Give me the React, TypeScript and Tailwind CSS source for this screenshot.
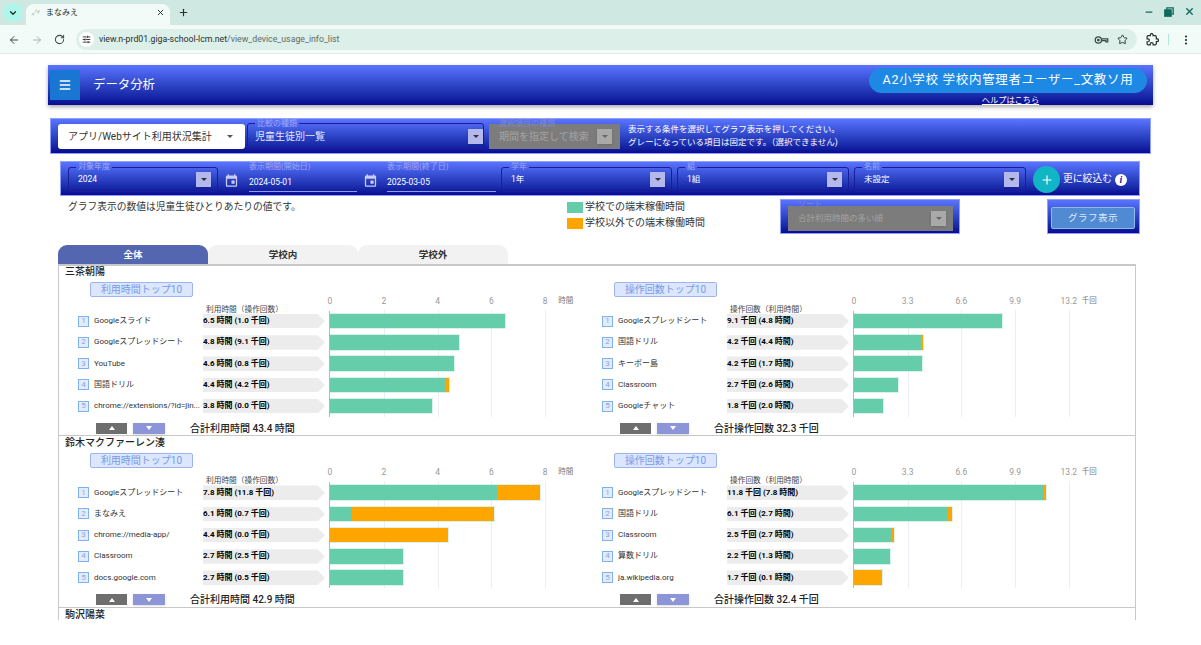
import React from 'react';
import { ArrowLeft, ArrowRight, ChevronDown, EllipsisVertical, Menu, Minus, Plus, RotateCw, SlidersHorizontal, Star, X } from 'lucide-react';

interface RankRow {
  name: string;
  value: string;
  school: number;
  other: number;
}

interface ChartProps {
  title: string;
  header: string;
  unit: string;
  ticks: string[];
  scale: number;
  total: string;
  rows: RankRow[];
}

const timeTicks = ['0', '2', '4', '6', '8'];
const countTicks = ['0', '3.3', '6.6', '9.9', '13.2'];

const students = [
  {
    name: '三茶朝陽',
    time: [
      { name: 'Googleスライド', value: '6.5 時間 (1.0 千回)', school: 175, other: 0 },
      { name: 'Googleスプレッドシート', value: '4.8 時間 (9.1 千回)', school: 129, other: 0 },
      { name: 'YouTube', value: '4.6 時間 (0.8 千回)', school: 124, other: 0 },
      { name: '国語ドリル', value: '4.4 時間 (4.2 千回)', school: 116, other: 2.6 },
      { name: 'chrome://extensions/?id=jin...', value: '3.8 時間 (0.0 千回)', school: 102, other: 0 },
    ],
    timeTotal: '合計利用時間 43.4 時間',
    count: [
      { name: 'Googleスプレッドシート', value: '9.1 千回 (4.8 時間)', school: 148, other: 0 },
      { name: '国語ドリル', value: '4.2 千回 (4.4 時間)', school: 67, other: 2 },
      { name: 'キーボー島', value: '4.2 千回 (1.7 時間)', school: 68, other: 0 },
      { name: 'Classroom', value: '2.7 千回 (2.6 時間)', school: 44, other: 0 },
      { name: 'Googleチャット', value: '1.8 千回 (2.0 時間)', school: 29, other: 0 },
    ],
    countTotal: '合計操作回数 32.3 千回',
  },
  {
    name: '鈴木マクファーレン湊',
    time: [
      { name: 'Googleスプレッドシート', value: '7.8 時間 (11.8 千回)', school: 167, other: 43 },
      { name: 'まなみえ', value: '6.1 時間 (0.7 千回)', school: 22, other: 142 },
      { name: 'chrome://media-app/', value: '4.4 時間 (0.0 千回)', school: 0, other: 118 },
      { name: 'Classroom', value: '2.7 時間 (2.5 千回)', school: 73, other: 0 },
      { name: 'docs.google.com', value: '2.7 時間 (0.5 千回)', school: 73, other: 0 },
    ],
    timeTotal: '合計利用時間 42.9 時間',
    count: [
      { name: 'Googleスプレッドシート', value: '11.8 千回 (7.8 時間)', school: 190, other: 2 },
      { name: '国語ドリル', value: '6.1 千回 (2.7 時間)', school: 94, other: 3.5 },
      { name: 'Classroom', value: '2.5 千回 (2.7 時間)', school: 38, other: 2 },
      { name: '算数ドリル', value: '2.2 千回 (1.3 時間)', school: 36, other: 0 },
      { name: 'ja.wikipedia.org', value: '1.7 千回 (0.1 時間)', school: 0, other: 27.5 },
    ],
    countTotal: '合計操作回数 32.4 千回',
  },
];

const DropButton = ({ muted = false }: { muted?: boolean }) => (
  <span className={`relative flex h-[15px] w-[15px] shrink-0 items-center justify-center shadow-sm ${muted ? 'bg-[#a9a9a9]' : 'bg-[#b4b8ec]'}`}>
    <span className={`h-0 w-0 border-x-[3px] border-t-[3px] border-x-transparent ${muted ? 'border-t-[#666]' : 'border-t-[#333]'}`} />
  </span>
);

// notched outline: the legend breaks the top border behind the label
const Outline = ({ label }: { label: string }) => (
  <fieldset className="absolute inset-x-0 bottom-0 top-[-5px] m-0 rounded-[3px] border border-[#1c1c9a] px-[7px] py-0">
    <legend className="h-[10px] px-[2px] text-[8px] leading-[10px] text-[#9fa8f5]">{label}</legend>
  </fieldset>
);

const OutlineSelect = ({ label, value, className }: { label: string; value: string; className: string }) => (
  <div className={`relative flex h-[25px] items-center justify-between pl-[10px] pr-[7px] ${className}`}>
    <Outline label={label} />
    <span className="relative text-[8.5px] leading-none text-white">{value}</span>
    <DropButton />
  </div>
);

const CalendarIcon = () => (
  <svg viewBox="0 0 24 24" className="mt-[2px] h-[15px] w-[15px] shrink-0" fill="#c9cdf5">
    <path d="M19 4h-1V2h-2v2H8V2H6v2H5a2 2 0 0 0-2 2v14a2 2 0 0 0 2 2h14a2 2 0 0 0 2-2V6a2 2 0 0 0-2-2zm0 16H5V9h14v11zm-7-8h5v5h-5z" />
  </svg>
);

const DateField = ({ label, value, className }: { label: string; value: string; className: string }) => (
  <div className={`relative h-[25px] border-b border-[#8f9bf5] ${className}`}>
    <span className="absolute left-0 top-[-5px] text-[8px] leading-[10px] text-[#9fa8f5]">{label}</span>
    <span className="absolute left-0 top-[10px] text-[8.5px] leading-[10px] text-white">{value}</span>
  </div>
);

const KeyIcon = () => (
  <svg viewBox="0 0 24 14" className="h-[10px] w-[15px]" fill="none" stroke="#3c4a47" strokeWidth="2">
    <circle cx="7" cy="7" r="5" />
    <circle cx="7" cy="7" r="1.2" fill="#3c4a47" />
    <path d="M12 5h10v5h-3v-2h-7" />
  </svg>
);

const ExtensionIcon = () => (
  <svg viewBox="0 0 24 24" className="ml-[9px] h-[13px] w-[13px]" fill="none" stroke="#26302e" strokeWidth="2.2">
    <path d="M20.5 11H19V7c0-1.1-.9-2-2-2h-4V3.5C13 2.12 11.88 1 10.5 1S8 2.12 8 3.5V5H4c-1.1 0-1.99.9-1.99 2v3.8H3.5c1.49 0 2.7 1.21 2.7 2.7s-1.21 2.7-2.7 2.7H2V20c0 1.1.9 2 2 2h3.8v-1.5c0-1.49 1.21-2.7 2.7-2.7s2.7 1.21 2.7 2.7V22H17c1.1 0 2-.9 2-2v-4h1.5c1.38 0 2.5-1.12 2.5-2.5S21.88 11 20.5 11z" />
  </svg>
);

const RestoreIcon = () => (
  <svg viewBox="0 0 12 12" className="h-[10px] w-[10px]" fill="none" stroke="#0e6b5c" strokeWidth="1.6">
    <rect x="1" y="3.5" width="7.5" height="7.5" fill="#0e6b5c" />
    <path d="M3.5 3V1H11v7.5H9" />
  </svg>
);

const FaviconIcon = () => (
  <svg viewBox="0 0 14 12" className="h-[9px] w-[11px]">
    <path d="M1 9 6 5 5 10z" fill="#b8d8d0" />
    <path d="M6 3 9 1 8 7z" fill="#e8d88a" />
    <path d="M9 5 13 2 11 8z" fill="#a8c8ea" />
  </svg>
);

const BrowserChrome = () => (
  <div className="h-[54px] shrink-0 border-b border-[#e2ece9] bg-[#f3fbf8]">
    <div className="flex h-[25px] items-end bg-[#cfe8e2] pl-[4px]">
      <div className="mb-[4px] flex h-[17px] w-[18px] items-center justify-center rounded-[6px] bg-[#aef5ea]">
        <ChevronDown size={10} strokeWidth={3} color="#17302b" />
      </div>
      <div className="ml-[4px] flex h-[21px] w-[144px] items-center rounded-t-[8px] bg-[#f3fbf8] pb-[4px] pl-[4px] pr-[5px]">
        <FaviconIcon />
        <span className="ml-[5px] flex-1 text-[8px] text-[#26302e]">まなみえ</span>
        <X size={9} strokeWidth={2.5} color="#26302e" />
      </div>
      <Plus size={11} strokeWidth={2.5} color="#26302e" className="mb-[7px] ml-[8px]" />
      <div className="mb-[8px] ml-auto flex items-center gap-[10px] pr-[6px]">
        <Minus size={10} strokeWidth={3} color="#0e6b5c" />
        <RestoreIcon />
        <X size={11} strokeWidth={3} color="#0e6b5c" />
      </div>
    </div>
    <div className="flex h-[29px] items-center pl-[8px]">
      <ArrowLeft size={12} strokeWidth={2} color="#3c4a47" />
      <ArrowRight size={12} strokeWidth={2} color="#a6b2ae" className="ml-[11px]" />
      <RotateCw size={11} strokeWidth={2.2} color="#3c4a47" className="ml-[11px]" />
      <div className="ml-[11px] flex h-[21px] w-[1061px] items-center rounded-full bg-[#dcefe9] pl-[3px] pr-[9px]">
        <span className="flex h-[15px] w-[15px] items-center justify-center rounded-full bg-white">
          <SlidersHorizontal size={9} strokeWidth={2.4} color="#26302e" />
        </span>
        <span className="ml-[5px] flex-1 text-[8.75px] text-[#26302e]">
          view.n-prd01.giga-school-lcm.net<span className="text-[#5c6b67]">/view_device_usage_info_list</span>
        </span>
        <KeyIcon />
        <Star size={11} strokeWidth={2} color="#26302e" className="ml-[8px]" />
      </div>
      <ExtensionIcon />
      <span className="ml-[9px] h-[11px] w-px bg-[#aee8dc]" />
      <EllipsisVertical size={12} strokeWidth={2.4} color="#26302e" className="ml-[11px]" />
    </div>
  </div>
);

const PageHeader = () => (
  <div className="ml-[48px] mt-[11px] flex h-[40px] w-[1105px] bg-gradient-to-b from-[#5b74ff] to-[#0a0a90] shadow-[0_2px_4px_rgba(0,0,0,0.35)]">
    <div className="ml-[2px] mt-[5px] flex h-[30px] w-[30px] items-center justify-center bg-[#1976d2]">
      <Menu size={14} strokeWidth={2.6} color="#fff" />
    </div>
    <div className="ml-[13px] mt-[11px] text-[12.4px] leading-[18px] text-white">データ分析</div>
    <div className="ml-auto mr-[6px] mt-[3px] flex w-[278px] flex-col items-center">
      <div className="flex h-[25px] w-full items-center justify-center rounded-full bg-[#1e88e5] text-[12.5px] tracking-[0.7px] text-white">
        A2小学校 学校内管理者ユーザー_文教ソ用
      </div>
      <a className="ml-[5px] mt-[2px] text-[8.2px] leading-[10px] text-white underline">ヘルプはこちら</a>
    </div>
  </div>
);

const ConditionBar = () => (
  <div className="ml-[50px] mt-[13px] flex h-[36px] w-[1101px] items-center border border-[#8fa0ff] bg-gradient-to-b from-[#5b74ff] to-[#0a0a90] pl-[7px]">
    <div className="flex h-[25px] w-[187px] items-center justify-between rounded-[3px] bg-white pl-[10px] pr-[12px] shadow-sm">
      <span className="text-[10px] text-[#333]">アプリ/Webサイト利用状況集計</span>
      <span className="h-0 w-0 border-x-[3px] border-t-[3px] border-x-transparent border-t-[#555]" />
    </div>
    <div className="relative ml-[2px] flex h-[25px] w-[237px] items-center justify-between pl-[8px] pr-[1px]">
      <Outline label="比較の種類" />
      <span className="relative text-[10px] text-[#e4e6ff]">児童生徒別一覧</span>
      <DropButton />
    </div>
    <div className="relative ml-[5px] flex h-[25px] w-[131px] items-center justify-between bg-[#7c7c7c] pl-[10px] pr-[8px]">
      <span className="absolute left-[10px] top-[-5px] text-[8px] leading-[10px] text-[#8088c8]">選択項目の種類</span>
      <span className="text-[10px] text-[#a3a3a3]">期間を指定して検索</span>
      <DropButton muted />
    </div>
    <div className="ml-[8px] text-[8.5px] leading-[13px] text-white">
      <div>表示する条件を選択してグラフ表示を押してください。</div>
      <div>グレーになっている項目は固定です。（選択できません)</div>
    </div>
  </div>
);

const FilterBar = () => (
  <div className="ml-[60px] mt-[7px] flex h-[35px] w-[1080px] items-center border border-[#8fa0ff] bg-gradient-to-b from-[#5b74ff] to-[#0a0a90] pl-[7px] pt-[2px]">
    <OutlineSelect label="対象年度" value="2024" className="w-[150px]" />
    <span className="ml-[6px]"><CalendarIcon /></span>
    <DateField label="表示期間(開始日)" value="2024-05-01" className="ml-[10px] w-[108px]" />
    <span className="ml-[6px]"><CalendarIcon /></span>
    <DateField label="表示期間(終了日)" value="2025-03-05" className="ml-[9px] w-[109px]" />
    <OutlineSelect label="学年" value="1年" className="ml-[5px] w-[171px]" />
    <OutlineSelect label="組" value="1組" className="ml-[5px] w-[172px]" />
    <OutlineSelect label="名前" value="未設定" className="ml-[5px] w-[172px]" />
    <span className="ml-[7px] flex h-[27px] w-[27px] items-center justify-center rounded-full bg-[#12b5c6]">
      <Plus size={14} strokeWidth={2} color="#fff" />
    </span>
    <span className="ml-[3px] text-[9.8px] text-white">更に絞込む</span>
    <span className="ml-[3px] flex h-[12px] w-[12px] items-center justify-center rounded-full bg-white font-['Liberation_Serif',serif] text-[10px] font-bold italic leading-none text-[#1c1c9a]">i</span>
  </div>
);

const NoticeRow = () => (
  <div className="ml-[68px] mt-[3px] flex h-[35px] items-start">
    <div className="mt-[1px] w-[499px] text-[9.75px] leading-[14px] text-[#333]">グラフ表示の数値は児童生徒ひとりあたりの値です。</div>
    <div className="w-[213px] text-[10px] leading-[16px] text-[#333]">
      <div className="flex items-center gap-[2px]"><span className="h-[11px] w-[16px] bg-[#66cdaa]" />学校での端末稼働時間</div>
      <div className="flex items-center gap-[2px]"><span className="h-[11px] w-[16px] bg-[#ffa500]" />学校以外での端末稼働時間</div>
    </div>
    <div className="flex h-[35px] w-[180px] items-end border border-[#8fa0ff] bg-gradient-to-b from-[#5b74ff] to-[#0a0a90] pb-[2px] pl-[7px]">
      <div className="relative flex h-[25px] w-[165px] items-center justify-between bg-[#7c7c7c] pl-[10px] pr-[7px]">
        <span className="absolute left-[10px] top-[-6px] text-[8px] leading-[10px] text-[#8088c8]">ソート</span>
        <span className="text-[8.5px] text-[#a3a3a3]">合計利用時間の多い順</span>
        <DropButton muted />
      </div>
    </div>
    <div className="ml-[87px] flex h-[35px] w-[93px] items-center justify-center border border-[#8fa0ff] bg-gradient-to-b from-[#5b74ff] to-[#0a0a90]">
      <div className="mr-[1px] mt-[3px] flex h-[22px] w-[84px] items-center justify-center rounded-[2px] border border-[#8fb9ea] bg-[#4f8ad2] text-[9.5px] tracking-[0.5px] text-[#e4e9f5]">グラフ表示</div>
    </div>
  </div>
);

const Tabs = () => (
  <div className="ml-[58px] mt-[11px] flex h-[18.5px] text-[9.5px] font-bold leading-[19px]">
    <div className="w-[150px] rounded-t-[9px] bg-[#5566b0] text-center text-white">全体</div>
    <div className="w-[150px] rounded-t-[9px] bg-[#f2f2f2] text-center text-[#333]">学校内</div>
    <div className="w-[150px] rounded-t-[9px] bg-[#f2f2f2] text-center text-[#333]">学校外</div>
  </div>
);

const RankChart = ({ title, header, unit, ticks, scale, total, rows }: ChartProps) => (
  <div>
    <div className="ml-[31px] mt-[3px] flex h-[15px] w-[103px] items-center justify-center rounded-[2px] border border-[#9db5ef] bg-[#dce6fc] text-[10px] text-[#7a9ae8]">{title}</div>
    <div className="-mb-[4px] ml-[147px] mt-[8px] h-[10px] text-[7.7px] leading-[10px] text-[#444]">{header}</div>
    <div className="flex">
      <div className="w-[270px]">
        {rows.map((row, i) => (
          <div key={row.name} className="flex h-[21.25px] items-center">
            <span className="ml-[19px] flex h-[11px] w-[11px] items-center justify-center border border-[#7fb2f0] bg-[#e4ecfb] text-[8px] text-[#8ea5e0]">{i + 1}</span>
            <span className="ml-[5px] w-[109px] shrink-0 truncate text-[8px] text-[#333]">{row.name}</span>
            <span className="flex h-[14.5px] w-[122px] shrink-0 items-center whitespace-nowrap bg-[#ececec] text-[8px] font-bold text-black [clip-path:polygon(0_0,94%_0,100%_50%,94%_100%,0_100%)]">{row.value}</span>
          </div>
        ))}
      </div>
      <div className="relative w-[250px] border-l border-[#b8b8b8]">
        {ticks.map((tick, i) => (
          <div key={tick} className="absolute top-[-1px] h-[107px] w-px" style={{ left: i * scale }}>
            {i > 0 && <div className="h-full w-px bg-[#eceef5]" />}
            <span className="absolute left-0 top-[-14px] -translate-x-1/2 text-[8.5px] leading-[10px] text-[#999]">{tick}</span>
          </div>
        ))}
        <span className="absolute top-[-15px] text-[7.5px] leading-[10px] text-[#777]" style={{ left: 4 * scale + 13 }}>{unit}</span>
        {rows.map((row) => (
          <div key={row.name} className="relative flex h-[21.25px] items-center">
            <div className="flex shadow-[0_0_0_1px_rgba(102,205,170,0.25)]">
              {row.school > 0 && <span className="h-[14.5px] bg-[#66cdaa]" style={{ width: row.school }} />}
              {row.other > 0 && <span className="h-[14.5px] bg-[#ffa500]" style={{ width: row.other }} />}
            </div>
          </div>
        ))}
      </div>
    </div>
    <div className="mt-[5px] flex h-[13px] items-center">
      <span className="ml-[37px] flex h-[11px] w-[31px] items-center justify-center bg-[#6e6e6e]">
        <span className="h-0 w-0 border-x-[3.5px] border-b-[4px] border-x-transparent border-b-white" />
      </span>
      <span className="ml-[6px] flex h-[11px] w-[32px] items-center justify-center bg-[#8c95d8] shadow-sm">
        <span className="h-0 w-0 border-x-[3.5px] border-t-[4px] border-x-transparent border-t-white" />
      </span>
      <span className="ml-[25px] text-[10px] font-medium text-[#222]">{total}</span>
    </div>
  </div>
);

const Panel = () => (
  <div className="ml-[58px] h-[356px] w-[1078px] overflow-hidden border-x border-t-2 border-[#c8c8c8]">
    <div className="-mt-[1px]">
      {students.map((student) => (
        <div key={student.name} className="h-[171.5px] border-b border-[#c8c8c8]">
          <div className="ml-[6px] h-[14px] text-[10px] font-medium leading-[14px] text-[#222]">{student.name}</div>
          <div className="flex">
            <div className="w-[524px]">
              <RankChart title="利用時間トップ10" header="利用時間（操作回数）" unit="時間" ticks={timeTicks} scale={53.8} total={student.timeTotal} rows={student.time} />
            </div>
            <div className="w-[524px]">
              <RankChart title="操作回数トップ10" header="操作回数（利用時間）" unit="千回" ticks={countTicks} scale={53.7} total={student.countTotal} rows={student.count} />
            </div>
          </div>
        </div>
      ))}
      <div className="ml-[6px] h-[14px] text-[10px] font-medium leading-[14px] text-[#222]">駒沢陽菜</div>
    </div>
  </div>
);

export default function App() {
  return (
    <div className="flex h-[645px] w-[1201px] flex-col overflow-hidden bg-white font-[family-name:Roboto,'Noto_Sans_CJK_JP',sans-serif]">
      <BrowserChrome />
      <PageHeader />
      <ConditionBar />
      <FilterBar />
      <NoticeRow />
      <Tabs />
      <Panel />
    </div>
  );
}
